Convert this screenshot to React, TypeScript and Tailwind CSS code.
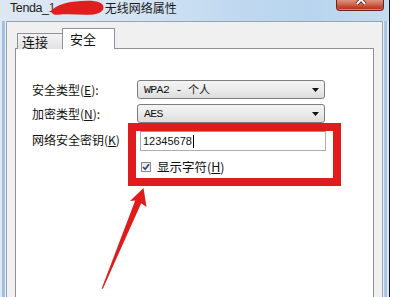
import React from "react";

const cjk = { fontFamily: '"Noto Sans CJK SC", "Noto Sans", sans-serif' };
const mono = { fontFamily: '"Liberation Mono", "Noto Sans CJK SC", monospace' };

function Select({ value, cjkPart }: { value: string; cjkPart?: string }) {
  return (
    <div className="flex items-center justify-between w-[188px] h-[19px] rounded-[3px] border border-[#7d7d7d] bg-[linear-gradient(to_bottom,#f4f4f4_0%,#ebebeb_50%,#dddddd_100%)] pl-[6px] pr-[5px]">
      <div className="flex items-center leading-none text-[#111]">
        <span className="text-[11.5px] whitespace-pre tracking-[-0.6px]" style={mono}>{value}</span>
        {cjkPart && (
          <span className="text-[11px]" style={cjk}>
            {cjkPart}
          </span>
        )}
      </div>
      <svg width="7" height="4" viewBox="0 0 7 4">
        <polygon points="0,0 7,0 3.5,4" fill="#111" />
      </svg>
    </div>
  );
}

export default function App() {
  return (
    <div className="relative w-[401px] h-[297px] overflow-hidden bg-white">
      <div className="flex flex-col w-[390px] h-[297px] border-r border-[#151515]">
        {/* Title bar */}
        <div className="flex h-[21px] shrink-0 bg-[linear-gradient(to_right,#dde7f2_0%,#d7e5f3_30%,#c0d9f0_60%,#b8d4ee_80%,#c4dcf1_100%)]">
          <div className="flex items-start pl-[10px] pt-[1px] leading-[14px]">
            <span
              className="text-[12.5px] text-[#1b1b1b] tracking-[-0.4px]"
              style={{ fontFamily: '"Liberation Sans", Arial, sans-serif' }}
            >
              Tenda_
            </span>
            <span className="relative w-[56px] h-[14px]">
              <span
                className="absolute left-[0px] top-0 text-[12px] text-[#333]"
                style={{ fontFamily: '"Liberation Sans", Arial, sans-serif' }}
              >
                1
              </span>
              <svg className="absolute left-0 top-[-1px]" width="56" height="16" viewBox="0 0 56 16">
                <path
                  d="M4,9 C10,4 22,1 38,0.8 C48,0.6 55,2.5 54.5,8 C54,13 46,15 37,14.8 C27,14.5 17,14 9,14.8 C3,15.3 0.5,11.5 4,9 Z"
                  fill="#e21d1d"
                />
              </svg>
            </span>
            <span className="text-[12px] text-[#1b1b1b]" style={cjk}>
              无线网络属性
            </span>
          </div>
          <div className="ml-auto mr-[5px] relative w-[48px] h-[11px] rounded-b-[4px] border border-t-0 border-[#6e2519] bg-[linear-gradient(to_bottom,#dc9281_0%,#d0634d_45%,#c3432d_70%,#b3301c_100%)] overflow-hidden shadow-[inset_0_-1px_0_rgba(255,200,180,0.5)]">
            <svg className="absolute left-[18px] top-[-5px]" width="12" height="10" viewBox="0 0 12 10">
              <path d="M2,0 L10,9 M10,0 L2,9" stroke="#5a1a10" strokeWidth="3.6" />
              <path d="M2,0 L10,9 M10,0 L2,9" stroke="#ffffff" strokeWidth="2" />
            </svg>
          </div>
        </div>

        {/* Body */}
        <div className="flex flex-1 min-h-0">
          <div className="w-[6px] shrink-0 bg-[linear-gradient(to_right,#dfe9f5_0px,#dfe9f5_2px,#a4c0e1_2px,#a4c0e1_5px,#edf2f8_5px,#edf2f8_6px)]" />
          <div className="flex-1 flex flex-col bg-[#f0f0f0] border-x border-t border-[#98a3b1] pt-[6px] px-[8px]">
            {/* Tabs */}
            <div className="relative z-10 -mb-px flex items-end ml-[2px]">
              <div
                className="w-[45px] h-[16px] border-l border-t border-[#8e9199] bg-[linear-gradient(to_bottom,#f3f3f3,#e2e2e2)] pl-[4px] text-[13px] leading-[15px] text-[#111]"
                style={cjk}
              >
                连接
              </div>
              <div
                className="w-[53px] h-[21px] border-l border-t border-r border-[#8e9199] bg-white pl-[7px] pt-[2px] text-[13px] leading-[15px] text-[#111]"
                style={cjk}
              >
                安全
              </div>
            </div>

            {/* Panel */}
            <div className="flex-1 bg-white border border-b-0 border-[#8e9199] pl-[16px] pt-[31px]">
              <div className="flex items-center h-[19px]">
                <div className="w-[105px] text-[12px] leading-none text-[#111]" style={cjk}>
                  安全类型(<span className="underline">E</span>):
                </div>
                <Select value="WPA2 - " cjkPart="个人" />
              </div>
              <div className="flex items-center h-[19px] mt-[5px]">
                <div className="w-[105px] text-[12px] leading-none text-[#111]" style={cjk}>
                  加密类型(<span className="underline">N</span>):
                </div>
                <Select value="AES" />
              </div>
              <div className="flex items-center h-[20px] mt-[8px]">
                <div className="w-[108px] text-[12px] leading-none text-[#111] -mt-[2px]" style={cjk}>
                  网络安全密钥(<span className="underline">K</span>)
                </div>
                <div className="flex items-center w-[186px] h-[20px] border border-[#abadb3] border-t-[#8f949c] bg-white pl-[2px]">
                  <span
                    className="text-[11px] leading-none text-[#111]"
                    style={{ fontFamily: '"Liberation Sans", Arial, sans-serif' }}
                  >
                    12345678
                  </span>
                  <span className="inline-block w-px h-[13px] bg-black ml-[1px]" />
                </div>
              </div>
              <div className="flex items-center h-[12px] mt-[10px] pl-[109px]">
                <div className="flex items-center justify-center w-[10px] h-[10px] border border-[#8a8a8a] bg-[linear-gradient(to_bottom,#e6e6e6,#fafafa)]">
                  <svg width="8" height="8" viewBox="0 0 8 8">
                    <path d="M1,4 L3.2,6.3 L7,1.3" stroke="#2a4779" strokeWidth="1.7" fill="none" />
                  </svg>
                </div>
                <span className="ml-[6px] text-[12.5px] leading-none text-[#111]" style={cjk}>
                  显示字符(<span className="underline">H</span>)
                </span>
              </div>
            </div>
          </div>
          <div className="w-[6px] shrink-0 bg-[linear-gradient(to_right,#e8eef6_0px,#e8eef6_1px,#b1c9e5_1px,#a9c3e2_4px,#dbe7f4_4px,#dbe7f4_6px)]" />
        </div>
      </div>

      {/* Annotation: red box */}
      <div className="absolute left-[128px] top-[123px] w-[213px] h-[63px] border-[8px] border-[#e01b1b] pointer-events-none" />

      {/* Annotation: red arrow */}
      <svg className="absolute left-0 top-0 pointer-events-none" width="401" height="297" viewBox="0 0 401 297">
        <polygon points="143.5,188 130,201 135.2,200.5 101.5,289 103,288.5 141.2,203.2 146.5,207" fill="#e01b1b" />
      </svg>
    </div>
  );
}
